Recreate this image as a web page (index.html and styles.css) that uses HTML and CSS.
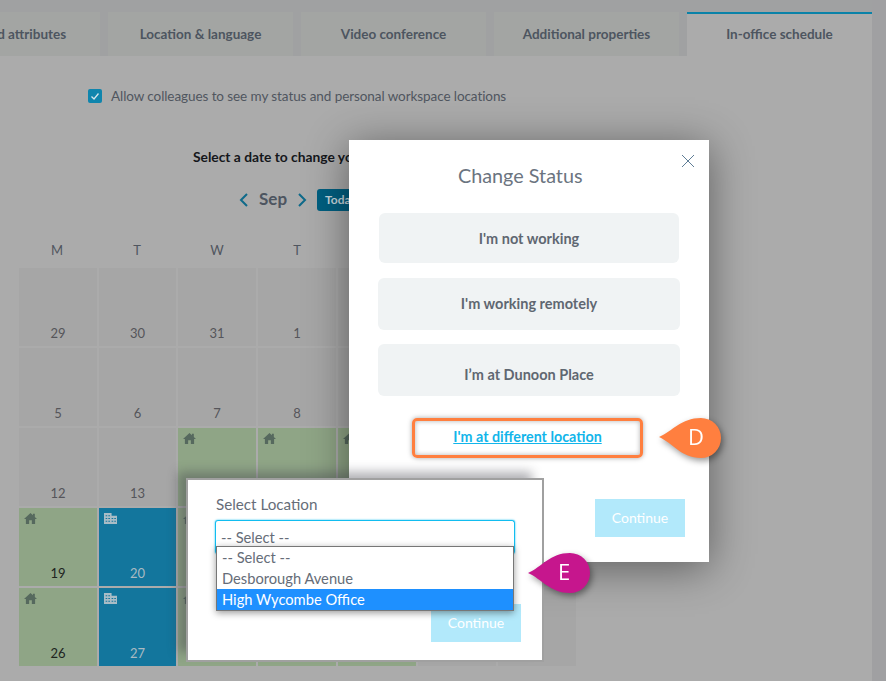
FILE: index.html
```html
<!DOCTYPE html>
<html lang="en">
    <head>
        <meta charset="UTF-8">
        <meta name="viewport" content="width=device-width, initial-scale=1.0">
        <title>In-office schedule</title>

        <link rel="stylesheet" href="styles.css">
    </head>
    <body>
        <svg class="defs" width="0" height="0">
            <symbol id="home" viewBox="0 0 24 24">
                <path d="M12 2 L0 13 h3.500 v9 h6 v-7 h5 v7 h6 v-9 H24 l-4-3.700 V3 h-3.500 v3z"/>
            </symbol>
            <symbol id="office" viewBox="0 0 24 24">
                <path fill-rule="evenodd" d="M0 2 h14 v5 h10 v15 H0z M3 6 v2 h3 v-2z M8 6 v2 h3 v-2z M3 11 v2 h3 v-2z M8 11 v2 h3 v-2z M14 11 v2 h3 v-2z M19 11 v2 h3 v-2z M3 16 v2 h3 v-2z M8 16 v2 h3 v-2z M14 16 v2 h3 v-2z M19 16 v2 h3 v-2z"/>
            </symbol>
        </svg>

        <div class="page">
            <div class="main">
                <nav class="tabs">
                    <div class="tab">Skills and attributes</div>
                    <div class="tab">Location &amp; language</div>
                    <div class="tab">Video conference</div>
                    <div class="tab">Additional properties</div>
                    <div class="tab active">In-office schedule</div>
                </nav>

                <label class="allow">
                    <span class="checkbox">
                        <svg viewBox="0 0 14 14" width="14" height="14"><path d="M3.500 7.500 L6 10 L10.500 4.500" fill="none" stroke="#d5e6ec" stroke-width="1.300"/></svg>
                    </span>
                    Allow colleagues to see my status and personal workspace locations
                </label>

                <p class="hint">Select a date to change your status</p>

                <div class="month">
                    <svg class="chev" viewBox="0 0 10 14" width="10" height="14"><path d="M8 1 L2 7 L8 13"/></svg>
                    <span class="month-name">Sep</span>
                    <svg class="chev" viewBox="0 0 10 14" width="10" height="14"><path d="M2 1 L8 7 L2 13"/></svg>
                    <span class="today">Today</span>
                </div>

                <div class="weekdays">
                    <span>M</span><span>T</span><span>W</span><span>T</span>
                </div>

                <div class="calendar" id="calendar"></div>
            </div>
            <div class="strip"></div>

            <section class="dialog status-dialog">
                <svg class="close" viewBox="0 0 14 14" width="14" height="14"><path d="M1 1 L13 13 M13 1 L1 13"/></svg>
                <h2>Change Status</h2>
                <div class="status-btn first">I'm not working</div>
                <div class="status-btn second">I'm working remotely</div>
                <div class="status-btn third">I’m at Dunoon Place</div>
                <div class="other"><a href="#">I'm at different location</a></div>
                <div class="continue">Continue</div>
            </section>

            <section class="dialog location-dialog">
                <div class="field-label">Select Location</div>
                <div class="select">-- Select --</div>
                <ul class="options">
                    <li>-- Select --</li>
                    <li>Desborough Avenue</li>
                    <li class="selected">High Wycombe Office</li>
                </ul>
                <div class="continue">Continue</div>
            </section>

            <svg class="callout callout-d" viewBox="0 0 62 40" width="62" height="40">
                <path d="M0 19 C14 13 22 0 42 0 a20 20 0 0 1 0 40 C22 40 14 25 0 19z"/>
                <text x="29" y="27">D</text>
            </svg>
            <svg class="callout callout-e" viewBox="0 0 62 40" width="62" height="40">
                <path d="M0 20 C14 14 22 0 42 0 a20 20 0 0 1 0 40 C22 40 14 26 0 20z"/>
                <text x="30" y="27">E</text>
            </svg>
        </div>

        <script>
            const days = [29,30,31,1,2,3,4,5,6,7,8,9,10,11,12,13,14,15,16,17,18,19,20,21,22,23,24,25,26,27,28,29,30,1,2]
            const calendar = document.querySelector('#calendar')

            const statusOf = (i) => {
                if (i == 21 || i == 28 || (i >= 16 && i <= 18) || (i >= 23 && i <= 25) || (i >= 30 && i <= 32)) return 'home'
                if (i == 22 || i == 29) return 'office'
                return ''
            }

            /* the two dialogs sit on top of these cells, their numbers never show */
            const covered = (row, col) => col >= 4 || (row >= 2 && col >= 2)

            days.forEach((day, i) => {
                const status = statusOf(i)
                const icon = status ? `<svg class="day-icon"><use href="#${status}"/></svg>` : ''
                const num = covered(Math.floor(i / 7), i % 7) ? '' : `<span class="num">${day}</span>`
                calendar.innerHTML += `<div class="day ${status}">${icon}${num}</div>`
            })
        </script>
    </body>
</html>
```

FILE: styles.css
```css
* {
    box-sizing: border-box;
    font-family: "Lato", "Open Sans", sans-serif;
}

body {
    margin: 0;
}

.defs {
    position: absolute;
}

.page {
    position: relative;
    display: flex;
    width: 886px;
    height: 681px;
    overflow: hidden;
    background: #ababab;
}

.main {
    width: 872px;
    flex: none;
}
.strip {
    flex: 1;
    background: #a0a0a2;
}

.tabs {
    display: flex;
    gap: 8px;
    height: 56px;
    padding-top: 12px;
    margin-left: -85px;
    width: 957px;
    background: #a0a1a2;
}
.tab {
    width: 185px;
    flex: none;
    display: flex;
    align-items: center;
    justify-content: center;
    background: #a3a5a3;
    color: #4d5560;
    font-size: 13.500px;
    font-weight: 700;
}
.tab.active {
    background: #ababab;
    border-top: 2px solid #0a82a8;
    padding-bottom: 2px;
}

.allow {
    display: flex;
    align-items: center;
    gap: 9px;
    margin: 32px 0 0 88px;
    height: 16px;
    color: #50565f;
    font-size: 13.500px;
    letter-spacing: -0.080px;
}
.checkbox {
    width: 14px;
    height: 14px;
    border-radius: 2px;
    background: #0f85ad;
}
.checkbox svg {
    display: block;
}

.hint {
    margin: 43px 0 0 193px;
    width: 156px;
    height: 20px;
    overflow: hidden;
    white-space: nowrap;
    line-height: 20px;
    color: #15171b;
    font-size: 13.800px;
    font-weight: 700;
}

.month {
    display: flex;
    align-items: center;
    height: 22px;
    margin: 22px 0 0 239px;
}
.chev {
    fill: none;
    stroke: #0e6a8a;
    stroke-width: 2;
}
.month-name {
    margin: 0 10px;
    padding-bottom: 4px;
    color: #4d5560;
    font-size: 17px;
    font-weight: 700;
}
.today {
    margin-left: 10px;
    padding-left: 8px;
    width: 32px;
    height: 22px;
    overflow: hidden;
    line-height: 22px;
    border-radius: 3px 0 0 3px;
    background: #005f80;
    color: #c4d5dc;
    font-size: 12px;
    font-weight: 700;
}

.weekdays {
    display: grid;
    grid-template-columns: repeat(4, 78px);
    gap: 2px;
    margin: 30px 0 0 18px;
    height: 18px;
    line-height: 18px;
    color: #50565f;
    font-size: 13px;
    text-align: center;
}

.calendar {
    display: grid;
    grid-template-columns: 78px 77px 78px 78px 78px 78px 78px;
    grid-auto-rows: 78px;
    gap: 2px;
    margin: 9px 0 0 19px;
}
.day {
    position: relative;
    display: flex;
    align-items: flex-end;
    justify-content: center;
    padding-bottom: 3px;
    background: #a6a6a6;
    color: #55555a;
    font-size: 13px;
    line-height: 20px;
}
.day.home {
    background: #8fa586;
    color: #20241f;
}
.day.office {
    background: #13769d;
    color: #a9bac2;
}
.day-icon {
    position: absolute;
    top: 4px;
    left: 5px;
    width: 13px;
    height: 13px;
    fill: #56695e;
}
.day.office .day-icon {
    fill: #a9bcc6;
}

.dialog {
    position: absolute;
    background: #fff;
}
.status-dialog {
    left: 349px;
    top: 140px;
    width: 360px;
    height: 422px;
    box-shadow: 0 6px 40px rgba(0, 0, 0, 0.45);
}
.close {
    position: absolute;
    top: 14px;
    right: 14px;
    fill: none;
    stroke: #5f7d96;
}
.status-dialog h2 {
    margin: 21px 0 0 109px;
    height: 28px;
    line-height: 28px;
    color: #6b7480;
    font-size: 19.800px;
    font-weight: 400;
}
.status-btn {
    display: flex;
    align-items: center;
    justify-content: center;
    border-radius: 6px;
    background: #f0f3f4;
    color: #5f6771;
    font-size: 14.500px;
    font-weight: 700;
}
.status-btn.first {
    width: 300px;
    height: 50px;
    margin: 24px 0 0 30px;
}
.status-btn.second {
    width: 302px;
    height: 52px;
    margin: 15px 0 0 29px;
    padding-bottom: 2px;
}
.status-btn.third {
    width: 302px;
    height: 52px;
    margin: 14px 0 0 29px;
    padding-top: 8px;
}
.other {
    display: flex;
    align-items: center;
    justify-content: center;
    width: 231px;
    height: 40px;
    margin: 22px 0 0 63px;
    padding-bottom: 4px;
    border: 3px solid #ff7f3f;
    border-radius: 5px;
    box-shadow: 0 0 5px rgba(0, 0, 0, 0.35), inset 0 0 5px rgba(0, 0, 0, 0.3);
}
.other a {
    color: #12b5ea;
    font-size: 14.300px;
    font-weight: 700;
}
.continue {
    width: 90px;
    height: 38px;
    line-height: 38px;
    text-align: center;
    background: #b2e9fb;
    color: #fff;
    font-size: 14px;
}
.status-dialog .continue {
    margin: 41px 0 0 246px;
}

.location-dialog {
    left: 186px;
    top: 478px;
    width: 358px;
    height: 184px;
    padding: 14px 21px 0 28px;
    border: 2px solid #a0a0a0;
    box-shadow: -10px -8px 10px -2px rgba(60, 60, 70, 0.4);
}
.field-label {
    height: 20px;
    line-height: 20px;
    color: #666d78;
    font-size: 15.200px;
}
.select {
    width: 300px;
    height: 34px;
    margin: 6px 0 0 -1px;
    padding: 7px 0 0 5px;
    border: 1px solid #12bdf0;
    border-bottom: 0;
    border-radius: 3px;
    line-height: 18px;
    color: #666d78;
    font-size: 14.700px;
    box-shadow: 0 0 2px #12bdf0;
}
.options {
    position: absolute;
    left: 28px;
    top: 66px;
    width: 298px;
    margin: 0;
    padding: 0;
    list-style: none;
    background: #fff;
    border: 1px solid #777;
    box-shadow: 0 2px 7px rgba(0, 0, 0, 0.4);
}
.options li {
    height: 21px;
    line-height: 21px;
    padding-left: 5px;
    color: #666d78;
    font-size: 14.700px;
}
.options li.selected {
    background: #1e90ff;
    color: #fff;
}
.location-dialog .continue {
    margin: 50px 0 0 215px;
}

.callout {
    position: absolute;
    overflow: visible;
    filter: drop-shadow(2px 3px 3px rgba(0, 0, 0, 0.4));
}
.callout text {
    fill: #fff;
    font-size: 22px;
    font-family: "Open Sans", sans-serif;
}
.callout-d {
    left: 659px;
    top: 418px;
}
.callout-d path {
    fill: #ff7f3f;
}
.callout-e {
    left: 528px;
    top: 553px;
}
.callout-e path {
    fill: #c6168d;
}
```
